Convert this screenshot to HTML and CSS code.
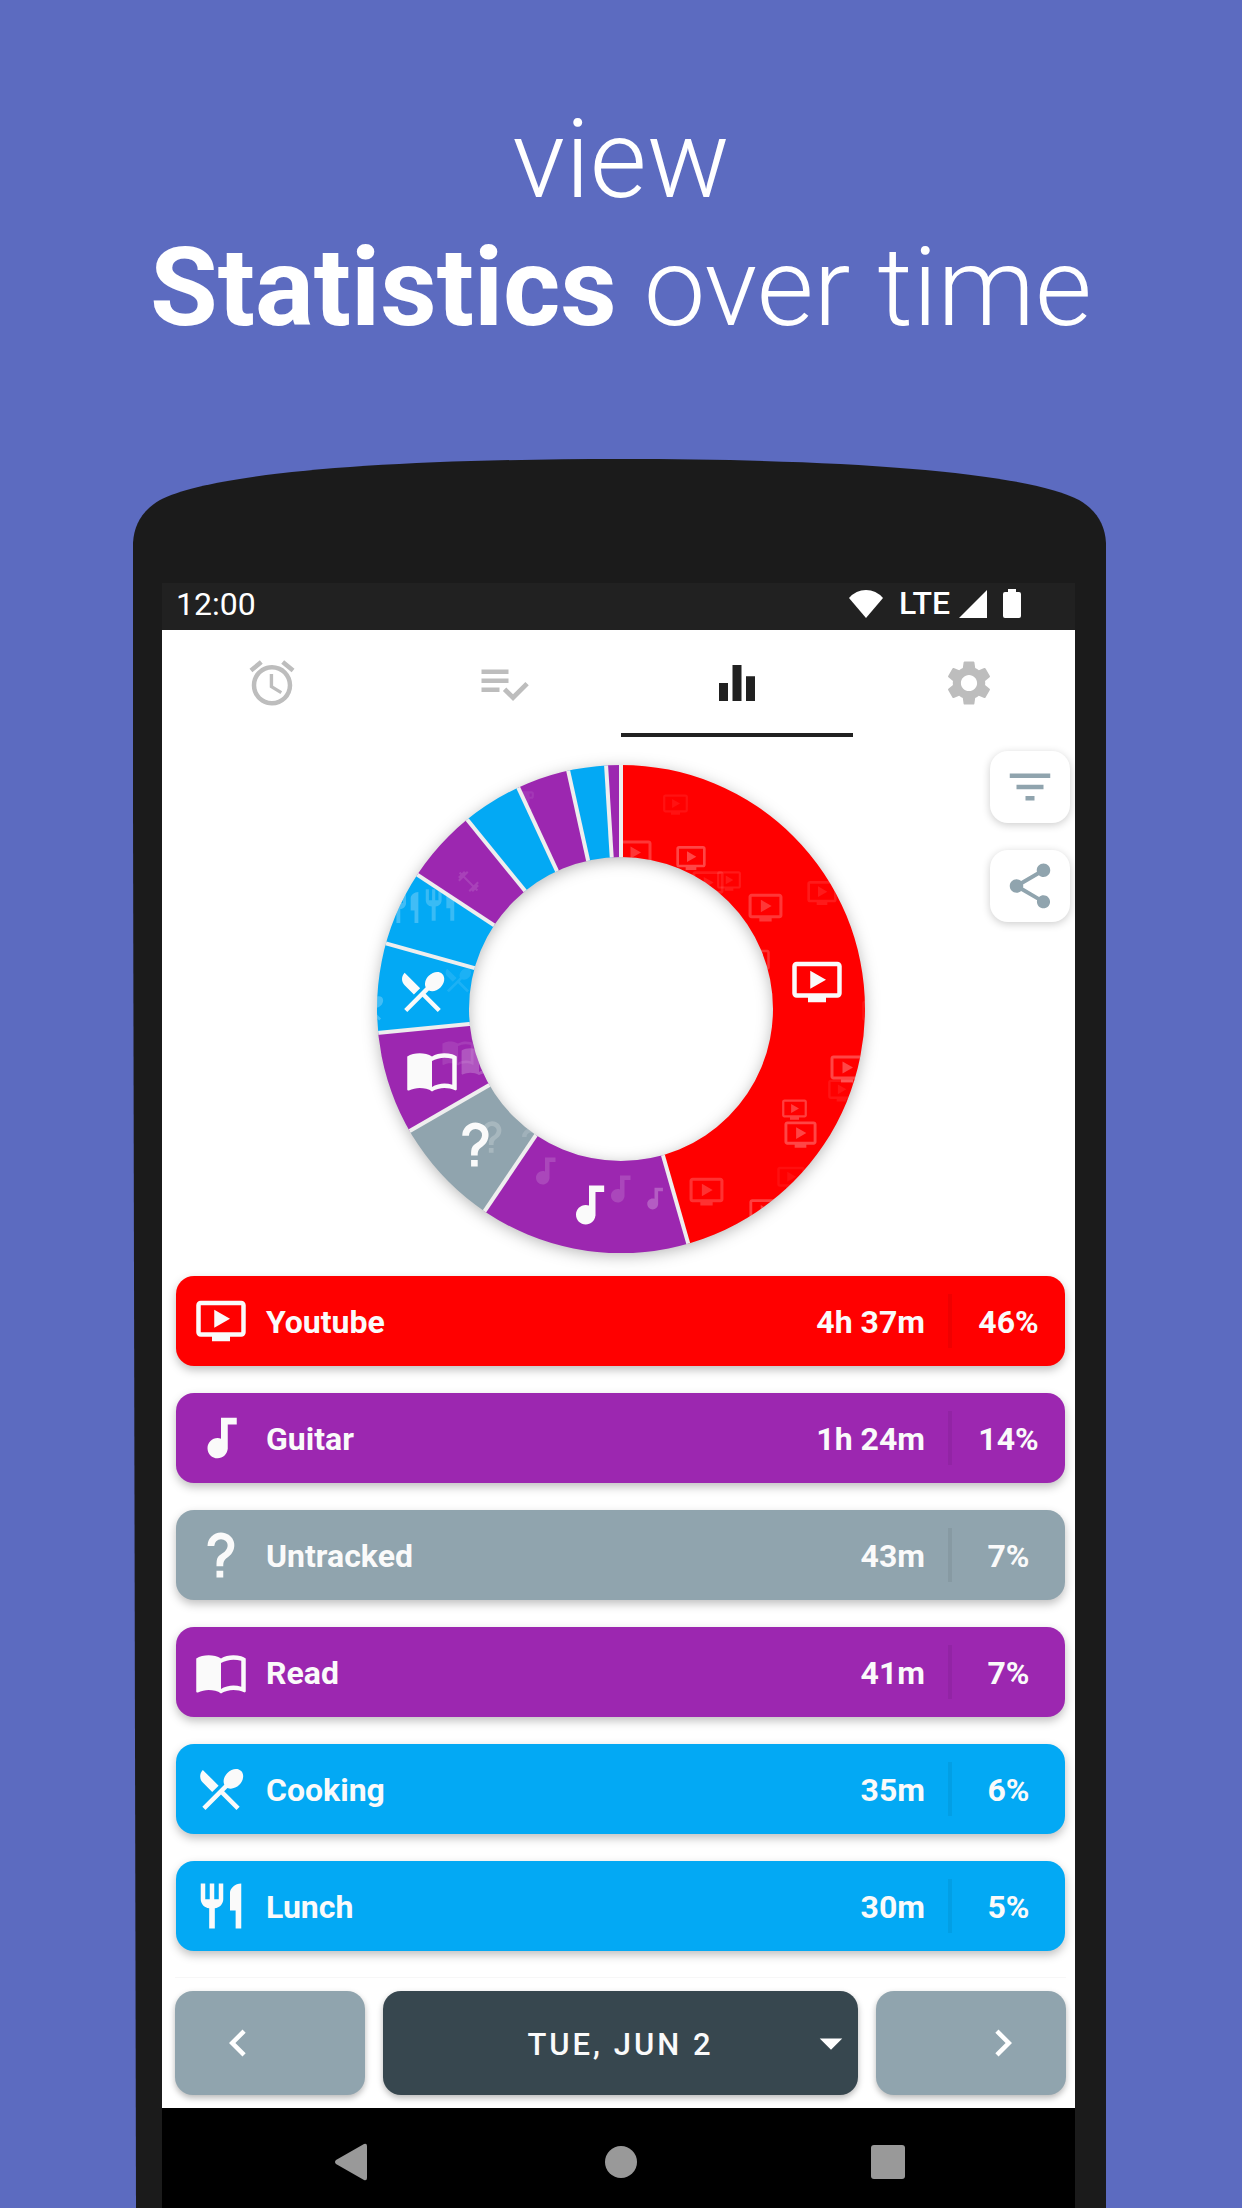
FILE: index.html
```html
<!DOCTYPE html>
<html lang="en">
<head>
<meta charset="utf-8">
<meta name="viewport" content="width=device-width, initial-scale=1">
<title>View statistics over time</title>
<link rel="stylesheet" href="styles.css">
</head>
<body>
<svg class="sprite" aria-hidden="true">
  <symbol id="video" viewBox="0 0 24 24"><path d="M21 3H3c-1.11 0-2 .89-2 2v12c0 1.1.89 2 2 2h5v2h8v-2h5c1.1 0 1.99-.9 1.99-2L23 5c0-1.11-.9-2-2-2zm0 14H3V5h18v12zm-5-6l-7 4V7z"/></symbol>
  <symbol id="note" viewBox="0 0 24 24"><path d="M12 3v9.280c-.47-.17-.97-.28-1.5-.28C8.010 12 6 14.010 6 16.500S8.010 21 10.500 21c2.310 0 4.200-1.750 4.450-4H15V6h4V3h-7z"/></symbol>
  <symbol id="question" viewBox="0 0 24 24"><path d="M10 19h3v3h-3v-3m2-17c5.350.220 7.680 5.620 4.500 9.670-.830 1-2.170 1.660-2.830 2.500C13 15 13 16 13 17h-3c0-1.670 0-3.080.670-4.080.660-1 2-1.590 2.830-2.250C15.920 8.430 15.320 5.260 12 5a3 3 0 0 0-3 3H6a6 6 0 0 1 6-6z"/></symbol>
  <symbol id="book" viewBox="0 0 24 24"><path d="M21 5c-1.110-.350-2.330-.500-3.500-.500-1.950 0-4.050.400-5.500 1.500-1.450-1.100-3.550-1.500-5.500-1.500S2.450 4.900 1 6v14.650c0 .250.250.500.500.500.100 0 .150-.050.250-.050C3.100 20.450 5.050 20 6.500 20c1.950 0 4.050.400 5.500 1.500 1.350-.850 3.800-1.500 5.500-1.500 1.650 0 3.350.300 4.750 1.050.100.050.150.050.250.050.250 0 .500-.250.500-.500V6c-.600-.450-1.250-.750-2-1zm0 13.500c-1.100-.350-2.300-.500-3.500-.500-1.700 0-4.150.650-5.500 1.500V8c1.350-.850 3.800-1.500 5.500-1.500 1.200 0 2.400.150 3.500.500v11.500z"/></symbol>
  <symbol id="cooking" viewBox="0 0 24 24"><path d="M8.1 13.34l2.83-2.83L3.91 3.5c-1.56 1.56-1.56 4.09 0 5.66l4.19 4.18zm6.78-1.81c1.53.71 3.68.21 5.27-1.38 1.91-1.91 2.28-4.65.81-6.12-1.46-1.46-4.2-1.1-6.12.81-1.59 1.59-2.09 3.74-1.38 5.27L3.7 19.87l1.41 1.41L12 14.41l6.88 6.88 1.41-1.41L13.41 13l1.47-1.47z"/></symbol>
  <symbol id="lunch" viewBox="0 0 24 24"><path d="M11 9H9V2H7v7H5V2H3v7c0 2.12 1.66 3.84 3.75 3.97V22h2.5v-9.03C11.34 12.84 13 11.12 13 9V2h-2v7zm5-3v8h2.5v8H21V2c-2.76 0-5 2.24-5 4z"/></symbol>
  <symbol id="gym" viewBox="0 0 24 24"><path d="M20.57 14.86L22 13.43 20.57 12 17 15.57 8.43 7 12 3.43 10.57 2 9.14 3.43 7.71 2 5.57 4.14 4.14 2.71 2.71 4.14l1.43 1.43L2 7.71l1.43 1.43L2 10.57 3.43 12 7 8.43 15.57 17 12 20.57 13.43 22l1.43-1.43L16.29 22l2.14-2.14 1.43 1.43 1.43-1.43-1.43-1.43L22 16.29z"/></symbol>
  <symbol id="cup" viewBox="0 0 24 24"><path d="M20 3H4v10c0 2.21 1.79 4 4 4h6c2.21 0 4-1.79 4-4v-3h2c1.11 0 2-.89 2-2V5c0-1.11-.89-2-2-2zm0 5h-2V5h2v3zM2 21h18v-2H2v2z"/></symbol>
</svg>

<h1 class="headline">view<br><strong>Statistics</strong> over time</h1>

<div class="phone">
  <svg class="phone-cap" viewBox="0 0 973 125" preserveAspectRatio="none" aria-hidden="true"><path d="M0 125V85C1 66 10 52 27 42C80 15 250 1 487 1S894 15 946 42C963 52 972 66 973 85V125Z"/></svg>
  <div class="phone-body">
    <div class="screen">
      <header class="status">
        <time>12:00</time>
        <div class="status-icons">
          <svg width="34" height="28" viewBox="0 0 34 28" aria-hidden="true"><path d="M17 28L0 8Q7 0 17 0T34 8Z"/></svg>
          <span class="network">LTE</span>
          <svg class="signal" width="28" height="28" viewBox="0 0 28 28" aria-hidden="true"><path d="M28 0V28H0Z"/></svg>
          <svg width="18" height="29" viewBox="0 0 18 29" aria-hidden="true"><path d="M5 0h8v3h3a2 2 0 0 1 2 2v22a2 2 0 0 1-2 2H2a2 2 0 0 1-2-2V5a2 2 0 0 1 2-2h3z"/></svg>
        </div>
      </header>

      <div class="app">
        <nav class="tabs" aria-label="Sections">
          <button class="tab" type="button" aria-label="Alarm"><svg class="icon" viewBox="0 0 24 24"><path d="M22 5.72l-4.600-3.860-1.290 1.530 4.600 3.860L22 5.720zM7.880 3.390L6.600 1.860 2 5.710l1.290 1.530 4.590-3.850zM12.500 8H11v6l4.750 2.850.750-1.230-4-2.370V8zM12 4c-4.970 0-9 4.030-9 9s4.020 9 9 9a9 9 0 0 0 0-18zm0 16c-3.870 0-7-3.130-7-7s3.130-7 7-7 7 3.130 7 7-3.130 7-7 7z"/></svg></button>
          <button class="tab" type="button" aria-label="Tasks"><svg class="icon" viewBox="0 0 24 24"><path d="M14 10H2v2h12v-2zm0-4H2v2h12V6zM2 16h8v-2H2v2zm19.500-4.500L23 13l-6.990 7-4.510-4.500L13 14l3.010 3 5.490-5.500z"/></svg></button>
          <button class="tab tab-active" type="button" aria-label="Statistics" aria-current="page"><svg class="icon" viewBox="0 0 24 24"><path d="M10 20h4V4h-4v16zm-6 0h4v-8H4v8zM16 9v11h4V9h-4z"/></svg></button>
          <button class="tab" type="button" aria-label="Settings"><svg class="icon" viewBox="0 0 24 24"><path d="M19.140 12.940c.040-.300.060-.610.060-.940 0-.320-.020-.640-.070-.940l2.030-1.580c.180-.140.230-.410.120-.610l-1.920-3.320c-.120-.220-.370-.290-.590-.220l-2.390.960c-.500-.380-1.030-.700-1.620-.940l-.360-2.540c-.040-.240-.240-.410-.480-.410h-3.840c-.240 0-.430.170-.470.410l-.360 2.540c-.590.240-1.130.570-1.620.940l-2.390-.960c-.220-.080-.470 0-.590.220L2.740 8.870c-.120.210-.080.470.120.610l2.030 1.580c-.050.300-.090.630-.090.940s.020.640.070.940l-2.030 1.580c-.180.140-.230.410-.120.610l1.920 3.320c.120.220.370.290.590.220l2.390-.960c.500.380 1.030.700 1.620.940l.360 2.540c.050.240.240.410.480.410h3.840c.240 0 .440-.170.470-.410l.360-2.540c.590-.240 1.130-.560 1.620-.940l2.390.960c.220.080.470 0 .590-.220l1.920-3.320c.120-.220.070-.470-.120-.610l-2.010-1.580zM12 15.600c-1.980 0-3.600-1.620-3.600-3.600s1.620-3.600 3.600-3.600 3.600 1.620 3.600 3.600-1.620 3.600-3.600 3.600z"/></svg></button>
        </nav>

        <section class="chart" aria-label="Time per activity">
          <svg class="donut" viewBox="-250 -250 500 500" role="img" aria-label="Share of the day spent on each activity">
            <clipPath id="ring"><path clip-rule="evenodd" d="M-244 0a244 244 0 1 1 488 0a244 244 0 1 1-488 0zM-152 0a152 152 0 1 0 304 0a152 152 0 1 0-304 0z"/></clipPath>
            <circle class="ring-base" r="198"/>
            <g clip-path="url(#ring)">
              <circle class="slice red" r="198" pathLength="360" stroke-dasharray="164 196"/>
              <g class="ghosts">
                <use href="#video" x="41" y="-218" width="27" height="27" opacity=".07"/>
                <use href="#video" x="-4" y="-173" width="36" height="36" opacity=".22"/>
                <use href="#video" x="54" y="-167" width="32" height="32" opacity=".28"/>
                <use href="#video" x="70" y="-142" width="34" height="34" opacity=".1"/>
                <use href="#video" x="95" y="-141" width="26" height="26" opacity=".1"/>
                <use href="#video" x="126" y="-120" width="37" height="37" opacity=".22"/>
                <use href="#video" x="185" y="-132" width="32" height="32" opacity=".1"/>
                <use href="#video" x="120" y="-63" width="30" height="30" opacity=".2"/>
                <use href="#video" x="240" y="-12" width="30" height="30" opacity=".08"/>
                <use href="#video" x="208" y="42" width="36" height="36" opacity=".28"/>
                <use href="#video" x="206" y="67" width="29" height="29" opacity=".08"/>
                <use href="#video" x="160" y="87" width="27" height="27" opacity=".25"/>
                <use href="#video" x="162" y="108" width="35" height="35" opacity=".28"/>
                <use href="#video" x="155" y="154" width="30" height="30" opacity=".06"/>
                <use href="#video" x="127" y="186" width="34" height="34" opacity=".25"/>
                <use href="#video" x="67" y="164" width="37" height="37" opacity=".2"/>
                <use href="#video" x="169" y="-54" width="54" height="54"/>
              </g>
              <circle class="slice gray" r="198" pathLength="360" stroke-dasharray="26 334" stroke-dashoffset="-214"/>
              <g class="ghosts">
                <use href="#question" x="-148" y="109" width="38" height="38" opacity=".22"/>
                <use href="#question" x="-108" y="116" width="36" height="36" opacity=".15"/>
                <use href="#question" x="-172" y="109" width="53" height="53"/>
              </g>
              <circle class="slice purple" r="198" pathLength="360" stroke-dasharray="50 310" stroke-dashoffset="-164"/>
              <g class="ghosts">
                <use href="#note" x="-94" y="144" width="36" height="36" opacity=".15"/>
                <use href="#note" x="-19" y="162" width="36" height="36" opacity=".15"/>
                <use href="#note" x="19" y="175" width="29" height="29" opacity=".25"/>
                <use href="#note" x="-58" y="170" width="52" height="52"/>
              </g>
              <circle class="slice purple" r="198" pathLength="360" stroke-dasharray="24.400 335.600" stroke-dashoffset="-240"/>
              <g class="ghosts">
                <use href="#book" x="-180" y="26" width="34" height="34" opacity=".1"/>
                <use href="#book" x="-161" y="32" width="38" height="38" opacity=".22"/>
                <use href="#book" x="-216" y="34" width="54" height="54"/>
              </g>
              <circle class="slice blue" r="198" pathLength="360" stroke-dasharray="21.200 338.800" stroke-dashoffset="-264.400"/>
              <g class="ghosts">
                <use href="#cooking" x="-179" y="-45" width="32" height="32" opacity=".1"/>
                <use href="#cooking" x="-267" y="-17" width="32" height="32" opacity=".25"/>
                <use href="#cooking" x="-225" y="-44" width="53" height="53"/>
              </g>
              <circle class="slice blue" r="198" pathLength="360" stroke-dasharray="17.800 342.200" stroke-dashoffset="-285.600"/>
              <g class="ghosts">
                <use href="#lunch" x="-235" y="-120" width="37" height="37" opacity=".25"/>
                <use href="#lunch" x="-200" y="-123" width="38" height="38" opacity=".22"/>
              </g>
              <circle class="slice purple" r="198" pathLength="360" stroke-dasharray="17.500 342.500" stroke-dashoffset="-303.400"/>
              <g class="ghosts"><use href="#gym" x="-165" y="-140" width="25" height="25" opacity=".12"/></g>
              <circle class="slice purple" r="198" pathLength="360" stroke-dasharray="12.400 347.600" stroke-dashoffset="-335.100"/>
              <g class="ghosts"><use href="#cup" x="-111" y="-221" width="26" height="26" opacity=".08"/></g>
              <circle class="slice blue" r="198" pathLength="360" stroke-dasharray="14.200 345.800" stroke-dashoffset="-320.900"/>
              <circle class="slice blue" r="198" pathLength="360" stroke-dasharray="9 351" stroke-dashoffset="-347.500"/>
              <circle class="slice purple" r="198" pathLength="360" stroke-dasharray="3.500 356.500" stroke-dashoffset="-356.500"/>
              <g class="dividers">
                <path d="M0-150V-246"/>
                <path d="M0-150V-246" transform="rotate(164)"/>
                <path d="M0-150V-246" transform="rotate(214)"/>
                <path d="M0-150V-246" transform="rotate(240)"/>
                <path d="M0-150V-246" transform="rotate(264.400)"/>
                <path d="M0-150V-246" transform="rotate(285.600)"/>
                <path d="M0-150V-246" transform="rotate(303.400)"/>
                <path d="M0-150V-246" transform="rotate(320.900)"/>
                <path d="M0-150V-246" transform="rotate(335.100)"/>
                <path d="M0-150V-246" transform="rotate(347.500)"/>
                <path d="M0-150V-246" transform="rotate(356.500)"/>
              </g>
            </g>
          </svg>
          <div class="chart-actions">
            <button class="action" type="button" aria-label="Filter"><svg class="icon" viewBox="0 0 24 24"><path d="M10 18h4v-2h-4v2zM3 6v2h18V6H3zm3 7h12v-2H6v2z"/></svg></button>
            <button class="action" type="button" aria-label="Share"><svg class="icon" viewBox="0 0 24 24"><path d="M18 16.080c-.760 0-1.440.300-1.960.770L8.910 12.700c.050-.230.090-.460.090-.700s-.040-.470-.090-.700l7.050-4.110c.540.500 1.250.810 2.040.810 1.660 0 3-1.340 3-3s-1.340-3-3-3-3 1.340-3 3c0 .240.040.470.090.700L8.040 9.810C7.500 9.310 6.790 9 6 9c-1.660 0-3 1.340-3 3s1.340 3 3 3c.790 0 1.500-.310 2.040-.810l7.120 4.160c-.050.210-.080.430-.080.650 0 1.610 1.310 2.920 2.920 2.920s2.920-1.310 2.920-2.920-1.310-2.920-2.920-2.920z"/></svg></button>
          </div>
        </section>

        <ul class="activities">
          <li class="activity red"><svg class="icon" aria-hidden="true"><use href="#video"/></svg><span class="name">Youtube</span><span class="duration">4h 37m</span><span class="share">46%</span></li>
          <li class="activity purple"><svg class="icon" aria-hidden="true"><use href="#note"/></svg><span class="name">Guitar</span><span class="duration">1h 24m</span><span class="share">14%</span></li>
          <li class="activity gray"><svg class="icon" aria-hidden="true"><use href="#question"/></svg><span class="name">Untracked</span><span class="duration">43m</span><span class="share">7%</span></li>
          <li class="activity purple"><svg class="icon" aria-hidden="true"><use href="#book"/></svg><span class="name">Read</span><span class="duration">41m</span><span class="share">7%</span></li>
          <li class="activity blue"><svg class="icon" aria-hidden="true"><use href="#cooking"/></svg><span class="name">Cooking</span><span class="duration">35m</span><span class="share">6%</span></li>
          <li class="activity blue"><svg class="icon" aria-hidden="true"><use href="#lunch"/></svg><span class="name">Lunch</span><span class="duration">30m</span><span class="share">5%</span></li>
        </ul>

        <div class="date-bar">
          <button class="step" type="button" aria-label="Previous day"><svg class="icon" viewBox="0 0 24 24"><path d="M15.410 7.410L14 6l-6 6 6 6 1.410-1.410L10.830 12z"/></svg></button>
          <div class="date">
            <select class="date-select" aria-label="Day shown"><option>TUE, JUN 2</option></select>
            <svg class="icon date-caret" viewBox="0 0 24 24" aria-hidden="true"><path d="M7 10l5 5 5-5z"/></svg>
          </div>
          <button class="step step-next" type="button" aria-label="Next day"><svg class="icon" viewBox="0 0 24 24"><path d="M10 6L8.590 7.410 13.170 12l-4.580 4.590L10 18l6-6z"/></svg></button>
        </div>

        <nav class="system-nav" aria-label="System">
          <button class="system-button" type="button" aria-label="Back"><svg width="38" height="38" viewBox="0 0 38 38"><path d="M1 17L29 1Q32 0 32 3V35Q32 38 29 37L1 21Q-1 19 1 17Z"/></svg></button>
          <button class="system-button" type="button" aria-label="Home"><svg width="38" height="38" viewBox="0 0 38 38"><circle cx="19" cy="19" r="16"/></svg></button>
          <button class="system-button" type="button" aria-label="Recent apps"><svg width="38" height="38" viewBox="0 0 38 38"><rect x="2" y="2" width="34" height="34" rx="3"/></svg></button>
        </nav>
      </div>
    </div>
  </div>
</div>
</body>
</html>
```
FILE: styles.css
```css
* { box-sizing: border-box; }

body {
  display: flex;
  flex-direction: column;
  min-height: 100vh;
  margin: 0;
  background: #5c6bc0;
  color: #fafafa;
  font-family: Roboto, "Liberation Sans", sans-serif;
  font-size: 32px;
}

button {
  padding: 0;
  border: 0;
  background: none;
  color: inherit;
  font: inherit;
}

svg { display: block; fill: currentColor; }

.sprite { position: absolute; width: 0; height: 0; }

.icon { flex: none; width: 54px; height: 54px; }

.headline {
  margin: 0;
  padding: 96px 0 106px;
  color: #fff;
  font-size: 110px;
  font-weight: 300;
  line-height: 128px;
  text-align: center;
}

.headline strong { font-weight: 700; }

/* Device frame */
.phone {
  display: flex;
  flex: 1;
  flex-direction: column;
  margin: 0 136px 0 133px;
  color: #1b1b1b;
  clip-path: polygon(0 0, 100% 0, 100% 100%, 3px 100%, 0 20%);
}

.phone-cap { width: 100%; height: 125px; }

.phone-body {
  display: flex;
  flex: 1;
  padding: 0 31px 0 29px;
  background: #1b1b1b;
}

.screen {
  display: flex;
  flex: 1;
  flex-direction: column;
  overflow: hidden;
  background: #fff;
}

.status {
  display: flex;
  align-items: center;
  justify-content: space-between;
  padding: 0 54px 4px 14px;
  background: #212121;
  color: #fff;
  line-height: 43px;
}

.status-icons {
  display: flex;
  align-items: center;
  gap: 16px;
  padding-bottom: 2px;
  line-height: 41px;
}

.network { font-weight: 500; }

.signal { margin-left: -7px; }

.app {
  display: flex;
  flex: 1;
  flex-direction: column;
  margin: 0 -10px 0 -6px;
}

/* Tabs */
.tabs { display: grid; grid-template-columns: repeat(4, 1fr); }

.tab {
  display: flex;
  justify-content: center;
  padding: 26px 0 23px;
  border-bottom: 4px solid transparent;
  color: #bdbdbd;
}

.tab-active { border-color: #212121; color: #212121; }

/* Chart */
.chart { position: relative; padding: 22px 0 17px; }

.donut { width: 500px; max-width: 100%; margin: 0 auto; overflow: visible; }

.ring-base {
  fill: none;
  stroke: #eee;
  stroke-width: 90;
  filter: drop-shadow(0 3px 8px rgba(0, 0, 0, .3));
}

.slice { fill: none; stroke-width: 94; transform: rotate(-90deg); }
.slice.red { stroke: #f00; }
.slice.purple { stroke: #9c27b0; }
.slice.gray { stroke: #90a4ae; }
.slice.blue { stroke: #03a9f4; }

.ghosts { fill: #fafafa; }

.dividers { stroke: #eee; stroke-width: 4; }

.chart-actions {
  position: absolute;
  top: 14px;
  right: 15px;
  display: grid;
  gap: 27px;
}

.action {
  display: grid;
  place-items: center;
  width: 80px;
  height: 72px;
  border-radius: 18px;
  background: #fff;
  box-shadow: 0 2px 8px rgba(0, 0, 0, .2);
  color: #90a4ae;
}

/* Activity rows */
.activities {
  display: grid;
  gap: 27px;
  margin: 0;
  padding: 0 20px 26px;
  list-style: none;
}

.activity {
  display: flex;
  align-items: center;
  gap: 18px;
  height: 90px;
  padding-left: 18px;
  border-radius: 18px;
  box-shadow: 0 4px 10px rgba(0, 0, 0, .25);
  color: #fafafa;
  font-weight: 700;
}

.activity.red { background: #f00; }
.activity.purple { background: #9c27b0; }
.activity.gray { background: #90a4ae; }
.activity.blue { background: #03a9f4; }

.name, .duration, .share { height: 54px; line-height: 56px; }

.name { flex: 1; }

.duration { padding-right: 5px; }

.share {
  width: 117px;
  border-left: 4px solid rgba(0, 0, 0, .06);
  text-align: center;
}

/* Date picker bar */
.date-bar {
  display: grid;
  grid-template-columns: 2fr 5fr 2fr;
  gap: 18px;
  margin: 0 19px;
  padding: 13px 0;
  border-top: 1px solid #f7f7f7;
}

.step, .date {
  display: flex;
  align-items: center;
  height: 104px;
  border-radius: 18px;
  box-shadow: 0 3px 6px rgba(0, 0, 0, .28);
  color: #fff;
}

.step { padding: 0 36px; background: #90a4ae; }

.step-next { justify-content: flex-end; }

.date { position: relative; background: #37474f; }

.date-select {
  width: 100%;
  height: 100%;
  padding: 2px 54px 0;
  border: 0;
  border-radius: 18px;
  background: none;
  color: #fafafa;
  font: 500 31px Roboto, "Liberation Sans", sans-serif;
  letter-spacing: 3px;
  text-align: center;
  text-align-last: center;
  appearance: none;
}

.date-caret { position: absolute; right: 0; pointer-events: none; }

/* System navigation */
.system-nav {
  display: flex;
  flex: 1;
  align-items: flex-start;
  justify-content: center;
  gap: 229px;
  padding: 35px 0 27px;
  background: #000;
  color: #999;
}
```
